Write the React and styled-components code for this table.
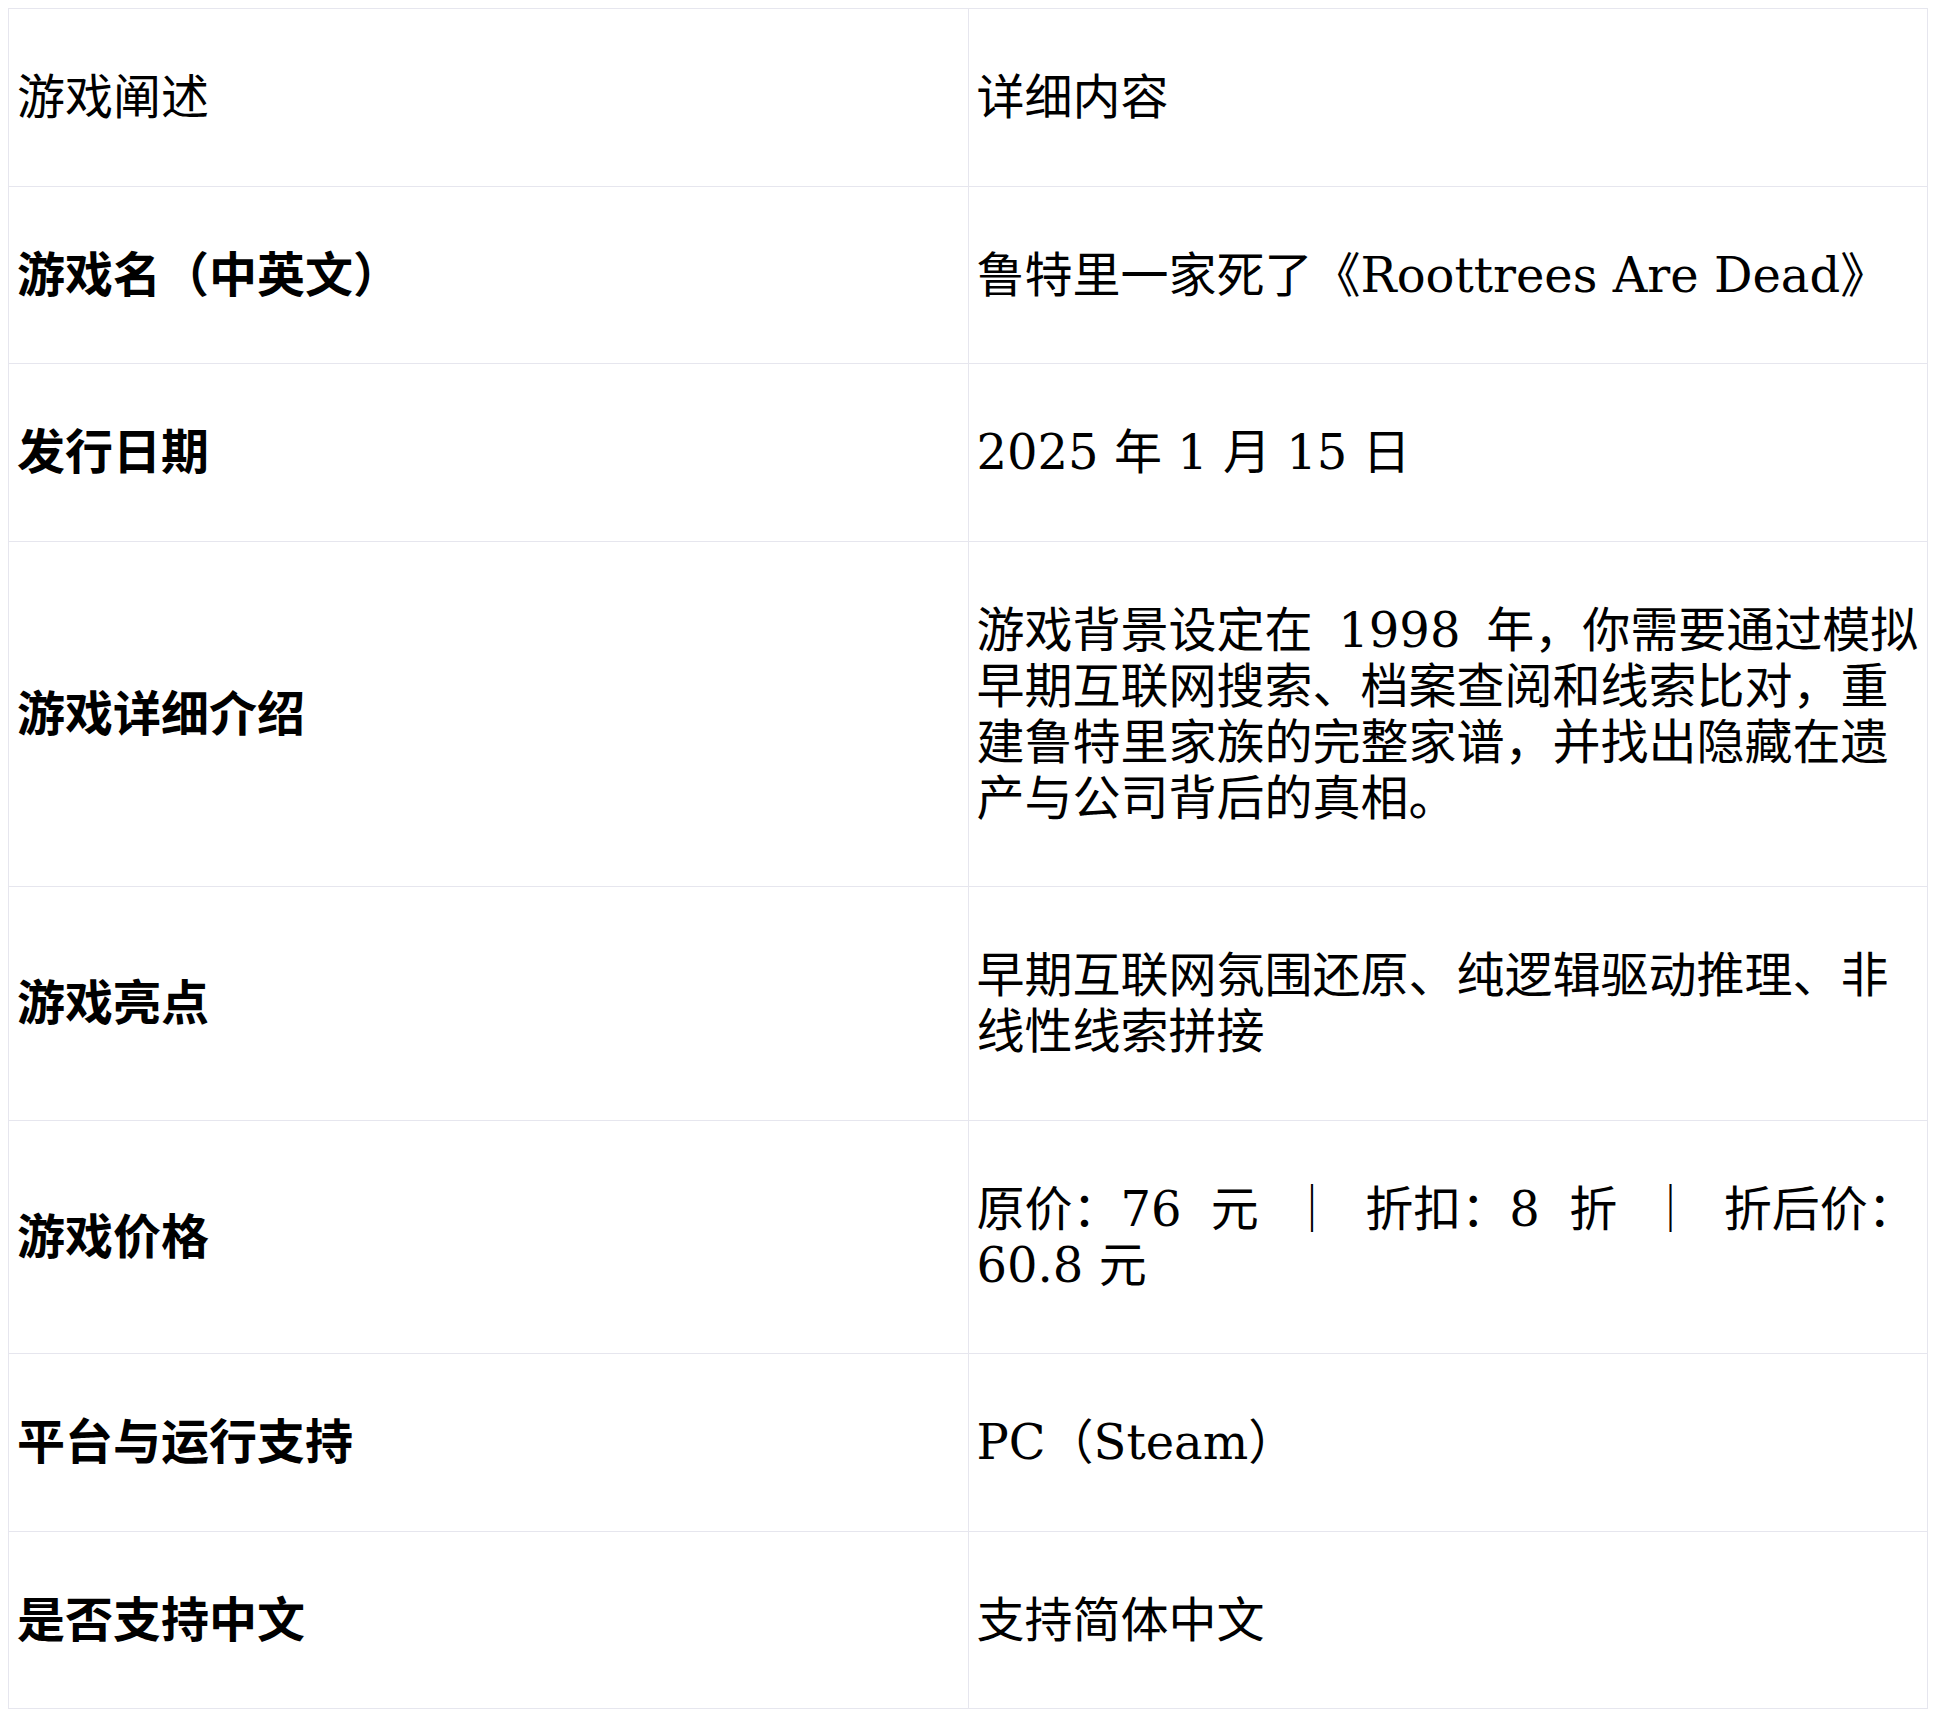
import React from 'react';
import styled, { createGlobalStyle } from 'styled-components';

const GlobalStyle = createGlobalStyle`
  body {
    margin: 8px;
    background: #fff;
    color: #000;
    font-family: "DejaVu Serif", "Noto Sans CJK SC", serif;
  }
`;

const Table = styled.table`
  width: calc(100% - 4px);
  border-collapse: collapse;
  table-layout: fixed;
  font-size: 48px;
  line-height: 56px;
`;

const Cell = styled.td`
  width: 50%;
  padding: 60.25px 8px;
  border: 1px solid #e6e6ee;
  vertical-align: middle;
  text-align: left;
  font-weight: ${(p) => (p.$label ? 700 : 400)};
`;

// justified first lines: only the spaces are stretched
const Spread = styled.span`
  word-spacing: ${(p) => p.$gap}px;
`;

const rows = [
  { label: '游戏名（中英文）', value: '鲁特里一家死了《Roottrees Are Dead》' },
  { label: '发行日期', value: '2025 年 1 月 15 日' },
  {
    label: '游戏详细介绍',
    value: (
      <>
        <Spread $gap={10.5}>游戏背景设定在 1998 年，</Spread>
        你需要通过模拟早期互联网搜索、档案查阅和线索比对，重建鲁特里家族的完整家谱，并找出隐藏在遗产与公司背后的真相。
      </>
    ),
  },
  { label: '游戏亮点', value: '早期互联网氛围还原、纯逻辑驱动推理、非线性线索拼接' },
  {
    label: '游戏价格',
    value: (
      <>
        <Spread $gap={14}>原价：76 元 ｜ 折扣：8 折 ｜ 折后价：</Spread>60.8 元
      </>
    ),
  },
  { label: '平台与运行支持', value: 'PC（Steam）' },
  { label: '是否支持中文', value: '支持简体中文' },
];

export default function App() {
  return (
    <>
      <GlobalStyle />
      <Table>
        <tbody>
          <tr>
            <Cell>游戏阐述</Cell>
            <Cell>详细内容</Cell>
          </tr>
          {rows.map((row) => (
            <tr key={row.label}>
              <Cell $label>{row.label}</Cell>
              <Cell>{row.value}</Cell>
            </tr>
          ))}
        </tbody>
      </Table>
    </>
  );
}
